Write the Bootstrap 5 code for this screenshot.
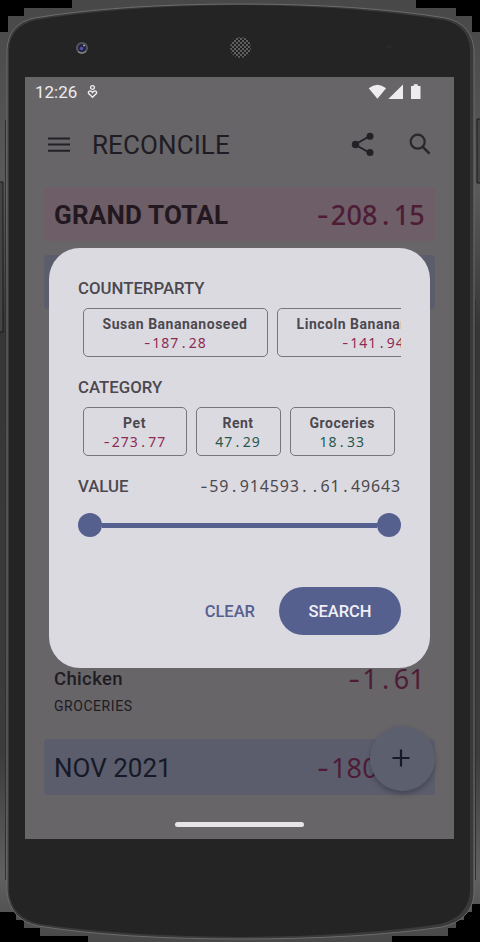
<!DOCTYPE html>
<html lang="en">
<head>
<meta charset="utf-8">
<meta name="viewport" content="width=device-width, initial-scale=1">
<title>Reconcile</title>
<link href="https://cdn.jsdelivr.net/npm/bootstrap@5.3.0/dist/css/bootstrap.min.css" rel="stylesheet">
<style>
body{width:480px;height:942px;overflow:hidden;background:#000;font-family:Roboto,sans-serif;line-height:1}
.phone{width:480px;height:942px;padding:77px 26px 0 25px}
.bezel{left:0;top:0}
.screen{width:429px;height:762px;background:#676568;color:#201c23}
.statusbar{height:30px;padding:0 33px 0 10px;color:#eeecef;font-size:17px}
.appbar{height:76px;padding:0 23px 0 22px}
.appbar h1{font-size:26px;font-weight:400;letter-spacing:.1px;margin:2px 0 0 21px}
.icon-find{margin-left:34px}
.rowbox{height:54px;margin:0 19px;padding:0 10px;border-radius:4px;font-size:26px}
.rowbox>span{padding-top:1px}
.total{margin-top:4px;background:#6d5e67;color:#231820;font-weight:700;letter-spacing:.2px}
.month{background:#5b5d6c;color:#161926}
.month.first{margin-top:14px}
.month.last{height:56px;padding-top:0}
.num{font-family:"Noto Sans",sans-serif;letter-spacing:.028em;white-space:nowrap}
.num i{font-family:Inter,sans-serif;font-style:normal;padding:0 .056em}
.num b{font-weight:inherit;padding:0 .166em}
.big{font-size:27px;letter-spacing:.008em}
.big i{padding:0 .06em}
.big b{padding:0 .155em}
.neg{color:#4e1c35}
.gap-rows{height:354px}
.entry{height:76px;padding:0 29px}
.entry .name{font-size:18.5px;padding-top:7px;letter-spacing:.35px}
.entry .kind{font-size:14px;letter-spacing:.55px;margin-top:10px}
.amount{margin-top:2px}
.dialog{left:24px;top:171px;width:381px;height:420px;border-radius:31px;background:#dcdae1;color:#4b494f;padding:31px 29px 0 29px}
.dialog h2{font-size:16.8px;font-weight:500;margin:0;height:18px;line-height:18px}
.chips{height:50px;margin:11px 0 20px;padding-left:4.500px;gap:9px}
.chip{flex:none;height:49px;border:1.4px solid #77757c;border-radius:5px;text-align:center;padding-top:8px;font-size:14px;font-weight:700;letter-spacing:.52px}
.chip .num{display:block;font-size:14px;font-weight:400;letter-spacing:1px;margin-top:5px}
.chip .r{color:#8d2b53}.chip .g{color:#25594f}
.w185{width:185px}.w193{width:193px}.w104{width:104px}.w85{width:85px}.w106{width:105.500px}
.range{font-size:16px;letter-spacing:.85px}
.slider{height:24px;margin-top:18px}
.slider .bar{height:5px;background:#56608f}
.knob{width:24px;height:24px;border-radius:50%;background:#56608f;flex:none}
.actions{margin-top:50px;gap:24px}
.actions button{font-size:16.5px;font-weight:500;border:0;line-height:1}
.txt{color:#56608f;background:none;padding:2px 0 0}
.go{width:122px;height:48px;border-radius:24px;background:#56608f;color:#f0eff8;padding:2px 0 0}
.fab{left:345px;top:649px;width:65px;height:65px;border-radius:50%;background:#5c5f6d;box-shadow:0 3px 5px rgba(30,30,40,.35)}
.fab svg{margin:-2px 0 0 -3px}
.handle{left:150px;top:745px;width:129px;height:5px;border-radius:3px;background:#e6e4e6}
</style>
<script src="https://cdn.jsdelivr.net/npm/bootstrap@5.3.0/dist/js/bootstrap.bundle.min.js"></script>
</head>
<body>
<div class="phone position-relative">
<svg class="bezel position-absolute" width="480" height="942" viewBox="0 0 480 942">
<defs>
<linearGradient id="edge" x1="0" y1="0" x2="0" y2="1"><stop offset="0" stop-color="#484848"/><stop offset=".2" stop-color="#5a5a5a"/><stop offset=".35" stop-color="#363636"/><stop offset=".8" stop-color="#3c3c3c"/><stop offset=".93" stop-color="#606060"/><stop offset="1" stop-color="#484848"/></linearGradient>
<pattern id="mesh" width="4" height="4" patternUnits="userSpaceOnUse"><rect width="4" height="4" fill="#606060"/><circle cx="1" cy="1" r="1.100" fill="#181818"/><circle cx="3" cy="3" r="1.100" fill="#181818"/></pattern>
</defs>
<path d="M0 32H8V16H24V8H72V0H416V8H456V16H472V32H480V904H472V912H464V920H456V928H448V936H392V942H88V936H40V928H24V920H16V912H0Z" fill="url(#edge)"/>
<path d="M7 50Q8 24 34 18Q120 4 240 4Q360 4 446 18Q472 24 474 50V894Q472 920 442 927Q360 939 240 939Q120 939 38 926Q10 920 7 892Z" fill="#3a3a3a" stroke="#6c6c6c" stroke-width="1"/>
<path d="M9 50Q10 26 36 20Q120 6 240 5Q360 6 444 20Q469 26 470 50V892Q468 917 440 924Q360 936 240 937Q120 936 40 924Q12 918 9 892Z" fill="#242424"/>
<path d="M5.500 120V880M475.500 300V880" stroke="#303030"/>
<path d="M0 182H3V332H0M480 119H477V183H480" fill="#444" stroke="#1b1b1b"/>
<circle cx="82" cy="48" r="6" fill="#55565a"/><circle cx="82" cy="48" r="4" fill="#24243f"/><circle cx="81.500" cy="48.500" r="1.800" fill="#5550a8"/><path d="M78 51.500Q82 55 86 51" stroke="#999" fill="none"/><circle cx="84" cy="45.500" r="1" fill="#aaa"/>
<circle cx="240.500" cy="47.500" r="10.500" fill="url(#mesh)"/>
<path d="M385 48l4-3 4 3zM405 46h5" fill="#2c2c2d" stroke="#292929"/>
</svg>
<main class="screen position-relative overflow-hidden">
<div class="statusbar d-flex align-items-center">
<span>12:26</span>
<svg class="ms-2" width="16" height="16" viewBox="0 0 16 16" fill="none" stroke="#eeecef" stroke-width="1.400"><circle cx="7.500" cy="3.500" r="1.900"/><path d="M7.500 13.300L3.700 9.600Q2.800 8 4.300 7.200Q6.100 6.600 7.500 8.500Q8.900 6.600 10.700 7.200Q12.200 8 11.300 9.600Z"/></svg>
<svg class="ms-auto" width="53" height="16" viewBox="0 0 53 16" fill="#eeecef"><path d="M.7 4.300Q9.400-2.700 18.100 4.300L9.400 14.800ZM20.300 15H35V.500ZM43 2h2.700V.3h4V2h2.800v13H43z"/></svg>
</div>
<header class="appbar d-flex align-items-center">
<svg width="24" height="16" viewBox="0 0 24 16"><path d="M1 1.500H23M1 7.500H23M1 13.700H23" stroke="#242126" stroke-width="2"/></svg>
<h1>RECONCILE</h1>
<svg class="ms-auto" width="24" height="26" viewBox="0 0 24 26" fill="#242126"><path d="M19 4L4 12.500L19 21" fill="none" stroke="#242126" stroke-width="2"/><circle cx="19" cy="4.200" r="3.500"/><circle cx="4.500" cy="12.500" r="3.700"/><circle cx="19" cy="20.500" r="3.500"/></svg>
<svg class="icon-find" width="22" height="24" viewBox="0 0 22 24" fill="none" stroke="#2a272c"><circle cx="8.700" cy="8.700" r="7" stroke-width="2.200"/><path d="M13.500 13.700L20.500 20.700" stroke-width="2.600"/></svg>
</header>
<section class="rowbox total d-flex align-items-center justify-content-between"><span>GRAND TOTAL</span><span class="num big neg fw-medium"><i>-</i>208<b>.</b>15</span></section>
<section class="rowbox month first"></section>
<div class="gap-rows"></div>
<section class="entry d-flex justify-content-between">
<div><div class="fw-medium name">Chicken</div><div class="kind">GROCERIES</div></div>
<span class="num big neg amount"><i>-</i>1<b>.</b>61</span>
</section>
<section class="rowbox month last d-flex align-items-center justify-content-between"><span>NOV 2021</span><span class="num big neg"><i>-</i>180<b>.</b>64</span></section>
<button class="fab position-absolute border-0 d-flex align-items-center justify-content-center p-0" aria-label="Add"><svg width="18" height="18" viewBox="0 0 18 18"><path d="M9 .5V17.500M.5 9H17.500" stroke="#161926" stroke-width="2.200"/></svg></button>
<div class="handle position-absolute"></div>
<section class="dialog position-absolute" role="dialog">
<h2>COUNTERPARTY</h2>
<div class="chips d-flex overflow-hidden">
<div class="chip w185">Susan Banananoseed<span class="num r"><i>-</i>187<b>.</b>28</span></div>
<div class="chip w193">Lincoln Banananoseed<span class="num r"><i>-</i>141<b>.</b>94</span></div>
</div>
<h2>CATEGORY</h2>
<div class="chips d-flex overflow-hidden">
<div class="chip w104">Pet<span class="num r"><i>-</i>273<b>.</b>77</span></div>
<div class="chip w85">Rent<span class="num g">47<b>.</b>29</span></div>
<div class="chip w106">Groceries<span class="num g">18<b>.</b>33</span></div>
</div>
<div class="d-flex justify-content-between align-items-center"><h2>VALUE</h2><span class="num range"><i>-</i>59<b>.</b>914593<b>.</b><b>.</b>61<b>.</b>49643</span></div>
<div class="slider d-flex align-items-center"><div class="knob"></div><div class="bar flex-grow-1"></div><div class="knob"></div></div>
<div class="actions d-flex justify-content-end align-items-center"><button class="txt">CLEAR</button><button class="go">SEARCH</button></div>
</section>
</main>
</div>
</body>
</html>
